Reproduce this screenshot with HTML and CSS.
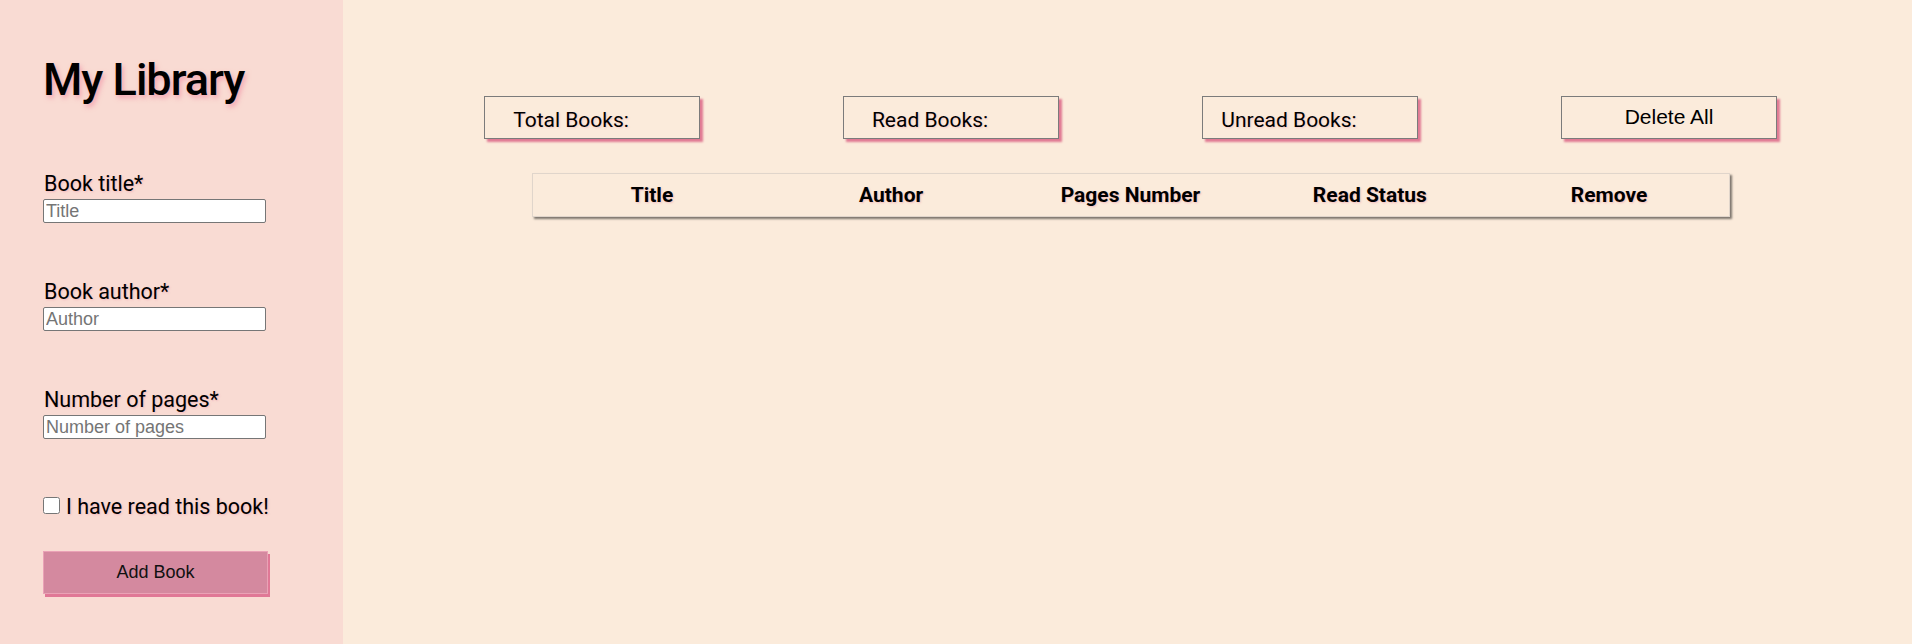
FILE: index.html
```html
<!DOCTYPE html>
<html lang="en">
<head>
<meta charset="utf-8">
<title>My Library</title>
<link rel="stylesheet" href="styles.css">
</head>
<body>
<div class="app">
  <aside class="sidebar">
    <h1 class="brand">My Library</h1>
    <form class="book-form">
      <div class="field">
        <label class="field-label" for="title">Book title*</label>
        <input class="field-input" id="title" type="text" placeholder="Title">
      </div>
      <div class="field">
        <label class="field-label" for="author">Book author*</label>
        <input class="field-input" id="author" type="text" placeholder="Author">
      </div>
      <div class="field">
        <label class="field-label" for="pages">Number of pages*</label>
        <input class="field-input" id="pages" type="number" placeholder="Number of pages">
      </div>
      <div class="check-row">
        <input class="check" id="read" type="checkbox">
        <label class="check-label" for="read">I have read this book!</label>
      </div>
      <button class="add-btn" type="button">Add Book</button>
    </form>
  </aside>
  <main class="main">
    <div class="stats">
      <div class="stat">Total Books:<span class="count"></span></div>
      <div class="stat">Read Books:<span class="count"></span></div>
      <div class="stat">Unread Books:<span class="count"></span></div>
      <button class="stat stat-btn" type="button">Delete All</button>
    </div>
    <table class="books">
      <thead>
        <tr>
          <th>Title</th>
          <th>Author</th>
          <th>Pages Number</th>
          <th>Read Status</th>
          <th>Remove</th>
        </tr>
      </thead>
      <tbody></tbody>
    </table>
  </main>
</div>
</body>
</html>
```
FILE: styles.css
```css
* { box-sizing: border-box; }

html, body {
  margin: 0;
  padding: 0;
  height: 100%;
}

body {
  font-family: Roboto, "Liberation Sans", Arial, sans-serif;
  color: #000;
  background: #fbebdb;
}

.app {
  display: flex;
  min-height: 644px;
}

.sidebar {
  width: 343px;
  flex: none;
  background: #f9dbd3;
  padding: 53px 0 0 43px;
}

.brand {
  margin: 0;
  font-size: 45px;
  line-height: 53px;
  font-weight: 500;
  letter-spacing: -1px;
  text-shadow: 2px 3px 5px rgba(238, 120, 150, 0.55);
}

.book-form {
  margin-top: 65px;
  display: flex;
  flex-direction: column;
  align-items: flex-start;
}

.field {
  display: flex;
  flex-direction: column;
  align-items: flex-start;
  margin-bottom: 56px;
}

.field-label {
  font-size: 21.5px;
  line-height: 25px;
  padding-left: 1px;
  text-shadow: 1px 1px 2px rgba(235, 120, 150, 0.35);
}

.field-input {
  margin-top: 3px;
  width: 223px;
  height: 24px;
  padding: 0 2px;
  border: 1px solid #767676;
  border-radius: 2px;
  background: #fff;
  font-family: "Liberation Sans", Arial, sans-serif;
  font-size: 18px;
  color: #000;
  -moz-appearance: textfield;
}

.field-input::placeholder { color: #757575; }

.field-input::-webkit-outer-spin-button,
.field-input::-webkit-inner-spin-button {
  -webkit-appearance: none;
  margin: 0;
}

.check-row {
  display: flex;
  align-items: flex-start;
  gap: 6px;
  margin-top: -1px;
}

.check {
  width: 17px;
  height: 17px;
  margin: 3px 0 0 0;
}

.check-label {
  font-size: 21.5px;
  line-height: 25px;
  text-shadow: 1px 1px 2px rgba(235, 120, 150, 0.35);
}

.add-btn {
  margin-top: 32px;
  width: 225px;
  height: 43px;
  background: #d4899f;
  border: 1px solid #eaa2b6;
  box-shadow: 2px 3px 0 #e07896;
  font-family: "Liberation Sans", Arial, sans-serif;
  font-size: 18px;
  color: #111;
  padding: 0;
}

.main {
  flex: 1;
  padding: 96px 0 0 6px;
}

.stats {
  display: flex;
  justify-content: center;
  gap: 143px;
}

.stat {
  width: 216px;
  height: 43px;
  border: 1px solid #7b7b7b;
  box-shadow: 3px 3px 2px #e07a93;
  background: #fbebdb;
  display: flex;
  align-items: center;
  justify-content: center;
  padding-top: 4px;
  font-size: 21px;
  text-shadow: 1px 1px 2px rgba(235, 120, 150, 0.3);
}

.count {
  display: inline-block;
  width: 42px;
}

.stat-btn {
  padding-top: 0;
  font-family: "Liberation Sans", Arial, sans-serif;
  font-size: 21px;
  color: #000;
  text-shadow: none;
}

.books {
  margin: 34px auto 0;
  width: 1198px;
  table-layout: fixed;
  border-collapse: collapse;
  border: 1px solid #e0d5cb;
  box-shadow: 2px 2px 2px rgba(0, 0, 0, 0.5);
}

.books th {
  height: 43px;
  padding: 0;
  font-size: 21px;
  font-weight: 700;
  text-align: center;
  text-shadow: 1px 1px 2px rgba(235, 120, 150, 0.4);
}
```
